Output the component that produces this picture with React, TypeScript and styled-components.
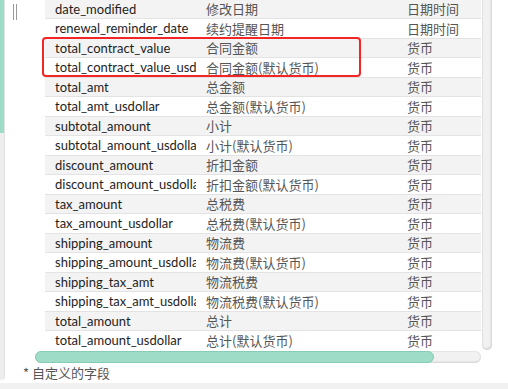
import React from 'react';
import styled, { createGlobalStyle } from 'styled-components';

type FieldRow = {
  name: string;
  label: string;
  type: string;
  highlight?: boolean;
};

const rows: FieldRow[] = [
  { name: 'date_modified', label: '修改日期', type: '日期时间' },
  { name: 'renewal_reminder_date', label: '续约提醒日期', type: '日期时间' },
  { name: 'total_contract_value', label: '合同金额', type: '货币', highlight: true },
  { name: 'total_contract_value_usdollar', label: '合同金额(默认货币)', type: '货币', highlight: true },
  { name: 'total_amt', label: '总金额', type: '货币' },
  { name: 'total_amt_usdollar', label: '总金额(默认货币)', type: '货币' },
  { name: 'subtotal_amount', label: '小计', type: '货币' },
  { name: 'subtotal_amount_usdollar', label: '小计(默认货币)', type: '货币' },
  { name: 'discount_amount', label: '折扣金额', type: '货币' },
  { name: 'discount_amount_usdollar', label: '折扣金额(默认货币)', type: '货币' },
  { name: 'tax_amount', label: '总税费', type: '货币' },
  { name: 'tax_amount_usdollar', label: '总税费(默认货币)', type: '货币' },
  { name: 'shipping_amount', label: '物流费', type: '货币' },
  { name: 'shipping_amount_usdollar', label: '物流费(默认货币)', type: '货币' },
  { name: 'shipping_tax_amt', label: '物流税费', type: '货币' },
  { name: 'shipping_tax_amt_usdollar', label: '物流税费(默认货币)', type: '货币' },
  { name: 'total_amount', label: '总计', type: '货币' },
  { name: 'total_amount_usdollar', label: '总计(默认货币)', type: '货币' },
];

const FieldList: React.FC = () => {
  const before = rows.slice(0, 2);
  const marked = rows.filter((r) => r.highlight);
  const after = rows.slice(4);

  const renderRow = (row: FieldRow, index: number) => (
    <Row key={row.name} $striped={index % 2 === 0}>
      <NameCell>{row.name}</NameCell>
      <LabelCell>{row.label}</LabelCell>
      <TypeCell>{row.type}</TypeCell>
    </Row>
  );

  return (
    <>
      <GlobalStyle />
      <Panel>
        <OuterScroll>
          <OuterThumb />
        </OuterScroll>
        <Content>
          <Body>
            <HandleColumn>
              <DragHandle />
            </HandleColumn>
            <ScrollArea>
              <TableArea>
                <Table>
                  {before.map((r, i) => renderRow(r, i))}
                  <Highlight>{marked.map((r, i) => renderRow(r, i + 2))}</Highlight>
                  {after.map((r, i) => renderRow(r, i + 4))}
                </Table>
                <VScroll />
              </TableArea>
              <HScroll>
                <HThumb />
              </HScroll>
            </ScrollArea>
          </Body>
          <Footnote>* 自定义的字段</Footnote>
        </Content>
      </Panel>
      <BottomBand />
    </>
  );
};

const GlobalStyle = createGlobalStyle`
  html, body {
    margin: 0;
    padding: 0;
    background: #ffffff;
    overflow: hidden;
  }
  body {
    font-family: Lato, "Noto Sans CJK SC", sans-serif;
    font-size: 13px;
  }
`;

const Panel = styled.div`
  display: flex;
  height: 383px;
  overflow: hidden;
`;

const OuterScroll = styled.div`
  width: 4px;
  height: 380px;
  background: #eeeeee;
  border-right: 1px solid #e2e2e2;
  border-bottom-right-radius: 4px;
  flex-shrink: 0;
`;

const OuterThumb = styled.div`
  height: 133px;
  width: 4px;
  background: #9fdcc8;
`;

const Content = styled.div`
  flex: 1;
  display: flex;
  flex-direction: column;
`;

const Body = styled.div`
  display: flex;
`;

const HandleColumn = styled.div`
  width: 30px;
  padding: 4px 0 0 7px;
  box-sizing: border-box;
`;

const DragHandle = styled.div`
  width: 4px;
  height: 16px;
  border-left: 1px solid #9a9a9a;
  border-right: 1px solid #9a9a9a;
  box-sizing: border-box;
  margin-left: 1px;
`;

const ScrollArea = styled.div`
  width: 458px;
  display: flex;
  flex-direction: column;
`;

const TableArea = styled.div`
  display: flex;
  height: 351px;
  overflow: hidden;
  padding-left: 10px;
`;

const Table = styled.div`
  width: 436px;
  margin-top: -1.5px;
`;

const Row = styled.div<{ $striped: boolean }>`
  display: flex;
  align-items: center;
  height: 19.5px;
  box-sizing: border-box;
  border-top: 1px solid #e3e3e3;
  background: ${(p) => (p.$striped ? '#f3f3f3' : '#ffffff')};
  white-space: nowrap;
`;

const Highlight = styled.div`
  position: relative;

  &::after {
    content: '';
    position: absolute;
    left: -3px;
    top: -0.5px;
    width: 319px;
    height: 40px;
    box-sizing: border-box;
    border: 2px solid #f42525;
    border-radius: 4px;
    pointer-events: none;
  }
`;

const NameCell = styled.div`
  width: 151px;
  padding-left: 10px;
  box-sizing: border-box;
  overflow: hidden;
  text-overflow: clip;
  color: #1e1e1e;
`;

const LabelCell = styled.div`
  width: 201px;
  padding-left: 10px;
  box-sizing: border-box;
  overflow: hidden;
  color: #555555;
  font-family: "Noto Sans CJK SC", Lato, sans-serif;
`;

const TypeCell = styled.div`
  flex: 1;
  padding-left: 10px;
  color: #555555;
  font-family: "Noto Sans CJK SC", Lato, sans-serif;
`;

const VScroll = styled.div`
  width: 10px;
  margin-left: 1px;
  height: 350px;
  background: #f1f1f1;
  border-radius: 0 0 6px 6px;
  box-shadow: inset -1px -1px 2px rgba(0, 0, 0, 0.14), inset 1px 0 1px rgba(0, 0, 0, 0.07);
  flex-shrink: 0;
`;

const HScroll = styled.div`
  width: 446px;
  height: 12px;
  background: #f1f1f1;
  border-radius: 6px;
  box-shadow: inset 0 -1px 2px rgba(0, 0, 0, 0.14), inset 0 1px 1px rgba(0, 0, 0, 0.05);
  display: flex;
`;

const HThumb = styled.div`
  width: 399px;
  height: 12px;
  box-sizing: border-box;
  background: #9fdcc8;
  border: 1px solid #86ccb6;
  border-radius: 6px;
`;

const Footnote = styled.div`
  padding: 1px 0 0 18px;
  color: #555555;
  font-family: "Noto Sans CJK SC", Lato, sans-serif;
  font-size: 13px;
  line-height: 18px;
`;

const BottomBand = styled.div`
  height: 6px;
  background: #f1f1f1;
`;

export default FieldList;
